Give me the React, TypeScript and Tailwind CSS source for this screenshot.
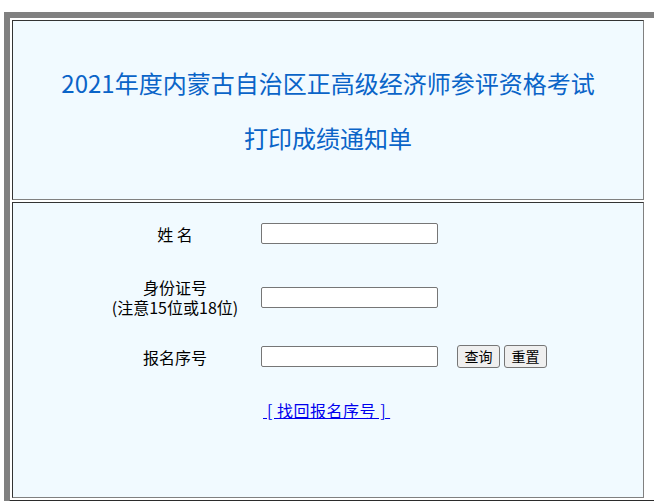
export default function App() {
  const font = { fontFamily: '"Microsoft YaHei", "Noto Sans CJK SC", sans-serif' };
  return (
    <div className="w-[654px] h-[501px] overflow-hidden bg-white" style={font}>
      <div className="ml-[4px] mt-[12px] w-[660px] border-t-[6px] border-l-[6px] border-r-[10px] border-b-[10px] border-t-[#808080] border-l-[#808080] border-r-[#2b2b2b] border-b-[#2b2b2b] bg-white p-[2px] flex flex-col gap-[2px]">
        <div className="w-[632px] h-[180px] border border-t-[#333] border-l-[#333] border-r-[#808080] border-b-[#808080] bg-[#f1faff] flex flex-col items-center pt-[44px] text-[24px] text-[#0a64c8] leading-[36px]">
          <div>2021年度内蒙古自治区正高级经济师参评资格考试</div>
          <div className="mt-[19px]">打印成绩通知单</div>
        </div>
        <div className="w-[632px] h-[296px] border border-t-[#333] border-l-[#333] border-r-[#808080] border-b-[#808080] bg-[#f1faff] text-[16px] text-black">
          <div className="flex items-center h-[21px] mt-[20px]">
            <div className="ml-[82px] w-[160px] text-center">姓 名</div>
            <input className="ml-[6px] w-[177px] h-[21px] border border-[#767676] rounded-[2px] bg-white" />
          </div>
          <div className="flex items-center mt-[33px]">
            <div className="ml-[82px] w-[160px] text-center leading-[20px]">
              <div>身份证号</div>
              <div>(注意15位或18位)</div>
            </div>
            <input className="ml-[6px] w-[177px] h-[21px] border border-[#767676] rounded-[2px] bg-white" />
          </div>
          <div className="flex items-center h-[23px] mt-[28px]">
            <div className="ml-[82px] w-[160px] text-center">报名序号</div>
            <input className="ml-[6px] w-[177px] h-[21px] border border-[#767676] rounded-[2px] bg-white" />
            <button className="ml-[19px] w-[43px] h-[23px] border border-[#767676] rounded-[3px] bg-[#efefef] text-[14px]">查询</button>
            <button className="ml-[4px] w-[43px] h-[23px] border border-[#767676] rounded-[3px] bg-[#efefef] text-[14px]">重置</button>
          </div>
          <div className="flex mt-[32px]">
            <a href="#" className="ml-[250px] text-[#0000ee] underline text-[16px] leading-[20px] tracking-[0.5px]">&nbsp;[&nbsp;找回报名序号&nbsp;]&nbsp;</a>
          </div>
        </div>
      </div>
    </div>
  );
}
